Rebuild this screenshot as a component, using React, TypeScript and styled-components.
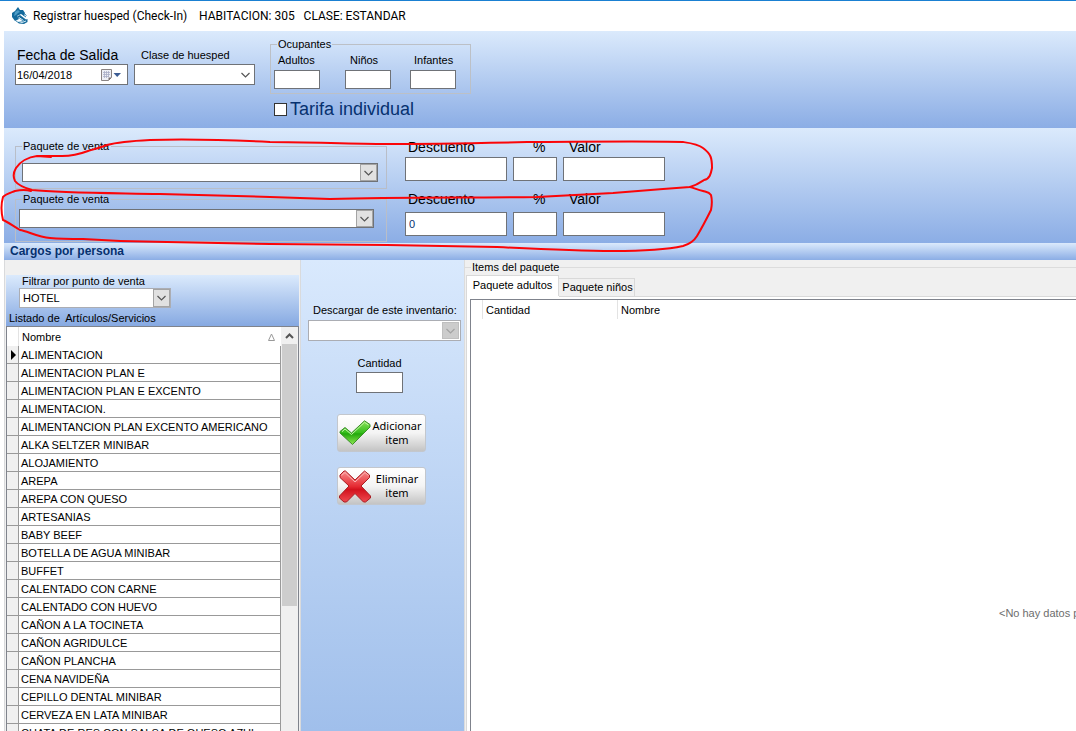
import React from "react";
import styled, { createGlobalStyle } from "styled-components";

const INK = "#000";
const NAVY = "#06316f";
const LINE = "#6f7277";
const PALE = "#dbeafc";
const DEEP = "#8badE5";

const GlobalStyle = createGlobalStyle`
  *, *::before, *::after { box-sizing: border-box; }
  html, body, #root { height: 100%; }
  body {
    margin: 0;
    overflow: hidden;
    background: #fff;
    color: ${INK};
    font: 11px/14px "Liberation Sans", Arial, sans-serif;
  }
  input, select, button { font: inherit; color: inherit; margin: 0; border-radius: 0; }
`;

const Window = styled.div`
  position: relative;
  display: flex;
  flex-direction: column;
  height: 100%;
  overflow: hidden;
  border-top: 1px solid #1a80d2;
  padding-left: 4px;
`;

const TitleBar = styled.header`
  display: flex;
  flex: none;
  align-items: center;
  height: 30px;
  padding-left: 8px;
  white-space: pre;
`;

const TitleText = styled.h1`
  margin: 0 0 0 5px;
  font: 12px/16px Roboto, sans-serif;
`;

const Band = styled.section`
  display: flex;
  flex: none;
  align-items: flex-start;
  background: linear-gradient(${PALE}, ${DEEP});
`;

const StayBand = styled(Band)`
  padding: 7px 11px 8px;
`;

const SaleBand = styled(Band)`
  padding: 11px 11px 1px;
`;

const Field = styled.div<{ $width?: number }>`
  display: flex;
  flex-direction: column;
  width: ${(p) => (p.$width ? `${p.$width}px` : "auto")};
`;

const TopField = styled(Field)`
  margin: 9px 6px 0 0;
  gap: 1px;
`;

const Label = styled.label<{ $large?: boolean; $indent?: number }>`
  padding-left: ${(p) => p.$indent ?? 0}px;
  font-size: ${(p) => (p.$large ? 14 : 11)}px;
  line-height: ${(p) => (p.$large ? 16 : 14)}px;
  white-space: pre;
`;

const ClassLabel = styled(Label)`
  line-height: 16px;
`;

const TextBox = styled.input<{ $width?: number; $height?: number }>`
  width: ${(p) => (p.$width ? `${p.$width}px` : "100%")};
  height: ${(p) => p.$height ?? 24}px;
  padding: 0 3px;
  border: 1px solid ${LINE};
  background: #fff;
  color: ${NAVY};
  outline: none;
`;

const DateBox = styled.div`
  display: flex;
  align-items: center;
  height: 21px;
  padding-right: 5px;
  border: 1px solid ${LINE};
  background: #fff;
`;

const DateInput = styled.input`
  flex: 1;
  min-width: 0;
  padding: 0 1px;
  border: 0;
  background: none;
  outline: none;
`;

const CalendarButton = styled.button`
  display: flex;
  align-items: center;
  padding: 0;
  border: 0;
  background: none;
`;

const Combo = styled.div<{ $width?: number; $height?: number; $soft?: boolean }>`
  display: grid;
  width: ${(p) => (p.$width ? `${p.$width}px` : "auto")};
  height: ${(p) => p.$height ?? 19}px;
  border: 1px solid ${(p) => (p.$soft ? "#abadb3" : LINE)};
  background: #fff;
`;

const ComboSelect = styled.select`
  grid-area: 1 / 1;
  width: 100%;
  height: 100%;
  padding: 0 3px;
  border: 0;
  background: none;
  appearance: none;
  outline: none;
  opacity: 1;
`;

const ComboArrow = styled.span<{ $kind: "flat" | "boxed" | "disabled" }>`
  grid-area: 1 / 1;
  justify-self: end;
  display: flex;
  align-items: center;
  justify-content: center;
  width: 17px;
  pointer-events: none;
  color: ${(p) => (p.$kind === "disabled" ? "#a3a3a3" : "#555")};
  background: ${(p) => ({ flat: "none", boxed: "#e1e1e1", disabled: "#ccc" })[p.$kind]};
  border: ${(p) => ({ flat: "0", boxed: "1px solid #a4a4a4", disabled: "1px solid #bfbfbf" })[p.$kind]};
  margin: ${(p) => (p.$kind === "disabled" ? "1px" : "0")};
`;

const Occupants = styled.fieldset`
  width: 201px;
  min-width: 0;
  margin: 0;
  padding: 3px 3px 4px;
  border: 1px solid #bcc0c6;
`;

const Legend = styled.legend`
  margin-left: 3px;
  padding: 0 1px;
  line-height: 12px;
`;

const OccupantGrid = styled.div`
  display: grid;
  grid-template-columns: 71px 65px 46px;
`;

const OccupantField = styled(Field)`
  gap: 3px;
`;

const OccupantColumn = styled.div`
  margin-left: 9px;
`;

const Tariff = styled.label`
  display: flex;
  align-items: center;
  gap: 3px;
  height: 22px;
  margin: 4px 0 0 4px;
  color: ${NAVY};
  font-size: 18px;
  line-height: 22px;
`;

const TickBox = styled.input`
  width: 13px;
  height: 13px;
  appearance: none;
  border: 1px solid #333;
  background: #fff;
  &:checked { background: ${NAVY}; }
`;

const PackageGroups = styled.div`
  display: flex;
  flex-direction: column;
  gap: 4px;
  width: 372px;
  margin: 1px 18px 0 0;
`;

const PackageGroup = styled.fieldset<{ $second?: boolean }>`
  min-width: 0;
  height: 49px;
  margin: 0;
  padding: ${(p) => (p.$second ? "4px 12px 0 3px" : "11px 8px 0 6px")};
  border: 1px solid #b9bec8;
`;

const PackageLegend = styled.legend<{ $second?: boolean }>`
  margin-left: ${(p) => (p.$second ? 3 : 0)}px;
  padding: 0 2px 0 1px;
  line-height: 12px;
`;

const Discounts = styled.div`
  display: flex;
  flex-direction: column;
  gap: 10px;
`;

const DiscountRow = styled.div<{ $gap: number }>`
  display: grid;
  grid-template-columns: 102px 44px 102px;
  column-gap: 6px;
  & > div { gap: ${(p) => p.$gap}px; }
`;

const SectionBar = styled.h2`
  flex: none;
  margin: 0;
  padding-left: 6px;
  height: 17px;
  background: linear-gradient(${PALE}, ${DEEP});
  color: ${NAVY};
  font-size: 12px;
  line-height: 17px;
`;

const Body = styled.main`
  display: flex;
  flex: 1;
  min-height: 0;
`;

const Catalog = styled.section`
  display: flex;
  flex: none;
  flex-direction: column;
  width: 297px;
  padding: 15px 1px 0;
  border: solid #d9dadc;
  border-width: 0 1px;
  background: #f0f0f0;
`;

const CatalogHead = styled.div`
  height: 51px;
  background: linear-gradient(${PALE}, #86a9e2);
`;

const FilterArea = styled.div`
  padding-left: 13px;
`;

const FilterLabel = styled(Label)`
  display: block;
  line-height: 13px;
`;

const ListCaption = styled.p`
  margin: 3px 0 0 3px;
  line-height: 14px;
  white-space: pre;
`;

const ListBox = styled.div`
  display: flex;
  flex: 1;
  min-height: 0;
  overflow: hidden;
  border: solid #7f838c;
  border-width: 1px 1px 0;
  background: #fff;
`;

const ItemTable = styled.table`
  flex: 1;
  align-self: flex-start;
  border-collapse: separate;
  border-spacing: 0;
  table-layout: fixed;
`;

const MarkHead = styled.th`
  width: 12px;
  padding: 0;
  border-right: 1px solid #e3e3e3;
`;

const NameHead = styled.th`
  height: 19px;
  padding: 0 6px 0 3px;
  font-weight: 400;
  text-align: left;
`;

const HeadLine = styled.span`
  display: flex;
  align-items: center;
  justify-content: space-between;
`;

const MarkCell = styled.td`
  height: 18px;
  padding: 0;
  border: solid #999;
  border-width: 0 1px 1px 0;
  background: #f0f0f0;
  line-height: 0;
`;

const NameCell = styled.td`
  height: 18px;
  padding: 1px 0 0 2px;
  border: solid #999;
  border-width: 0 1px 1px 0;
  line-height: 16px;
  white-space: nowrap;
`;

const ScrollTrack = styled.div`
  display: flex;
  flex-direction: column;
  align-items: stretch;
  width: 17px;
  padding: 0 1px;
  background: #f0f0f0;
`;

const ScrollUp = styled.button`
  display: flex;
  align-items: center;
  justify-content: center;
  height: 17px;
  padding: 0;
  border: 0;
  background: none;
  color: #555;
`;

const ScrollThumb = styled.div`
  height: 262px;
  background: #cdcdcd;
`;

const Transfer = styled.section`
  display: flex;
  flex: none;
  flex-direction: column;
  align-items: center;
  width: 163px;
  padding: 43px 2px 0 0;
  background: linear-gradient(#d9e9fd, #a0bfeb);
`;

const InventoryField = styled(Field)`
  width: 153px;
  gap: 3px;
  margin: 0 0 15px 6px;
`;

const QuantityField = styled(Field)`
  align-items: center;
  gap: 2px;
  margin: 0 4px 21px 0;
`;

const ActionButton = styled.button`
  display: flex;
  align-items: center;
  width: 89px;
  height: 38px;
  margin-bottom: 15px;
  padding: 0 2px 0 1px;
  border: 1px solid #c3c7cd;
  border-radius: 3px;
  background: linear-gradient(#fff, #f4f4f4 50%, #c4c4c4);
`;

const ActionText = styled.span`
  flex: 1;
  font: 11px/14px "Noto Sans", sans-serif;
  text-align: center;
`;

const Package = styled.section`
  display: flex;
  flex: 1 0 1210px;
  flex-direction: column;
  border-left: 1px solid #dcdcdc;
  background: #f0f0f0;
`;

const PackageTitle = styled.h3`
  display: flex;
  align-items: center;
  gap: 1px;
  margin: 0;
  font-size: 11px;
  font-weight: 400;
  line-height: 14px;
  &::before, &::after { content: ""; height: 1px; background: #dcdcdc; }
  &::before { width: 6px; }
  &::after { flex: 1; }
`;

const Tabs = styled.div`
  display: flex;
  align-items: flex-end;
  height: 21px;
  padding-left: 1px;
`;

const TabStrip = styled.div`
  padding-top: 1px;
`;

const Tab = styled.button<{ $active?: boolean }>`
  width: ${(p) => (p.$active ? 93 : 76)}px;
  height: ${(p) => (p.$active ? 21 : 18)}px;
  padding: ${(p) => (p.$active ? "0 0 2px" : "0 0 1px 2px")};
  border: 1px solid #d9d9d9;
  border-bottom: 0;
  border-left-width: ${(p) => (p.$active ? 1 : 0)}px;
  background: ${(p) => (p.$active ? "#fff" : "#f0f0f0")};
`;

const TabPage = styled.div`
  flex: 1;
  margin-left: 1px;
  padding: 3px;
  border-left: 1px solid #d9d9d9;
  background: linear-gradient(#d9d9d9, #d9d9d9) 92px 0 / 100% 1px no-repeat #fff;
`;

const PackageGrid = styled.div`
  border: 1px solid #7f838c;
  background: #fff;
`;

const GridTable = styled.table`
  width: 100%;
  border-collapse: separate;
  border-spacing: 0;
  table-layout: fixed;
`;

const GridHead = styled.th<{ $width?: number }>`
  width: ${(p) => (p.$width ? `${p.$width}px` : "auto")};
  height: 19px;
  padding: 0 3px;
  border-right: 1px solid #e3e3e3;
  font-weight: 400;
  text-align: left;
`;

const EmptyCell = styled.td`
  height: 588px;
  padding: 0;
  color: #6d6d6d;
  text-align: center;
`;

const RedMarks = styled.svg`
  position: absolute;
  top: -1px;
  left: 0;
  pointer-events: none;
`;

const Chevron = ({ up }: { up?: boolean }) => (
  <svg width="9" height="6" viewBox="0 0 9 6" fill="none" stroke="currentColor" strokeWidth={up ? 2 : 1.2}>
    <path d={up ? "M1 5 4.500 1.500 8 5" : "M.5 1 4.500 5 8.500 1"} />
  </svg>
);

const AppLogo = () => (
  <svg width="16" height="18" viewBox="0 0 16 18" aria-hidden="true">
    <path d="M6 0 8 3 11 3 13 6 12 9 9 7 5 9 7 12 3 14 0 10 0 6 3 4Z" fill="#146a9c" />
    <path d="M3 5 6 3 8 5 6 6 4 8 2 9Z" fill="#4d9cc6" />
    <path d="M5 9.500 8 8 14 12.500 15.500 12 15.500 15 12 17 7 16.500 3 13.500 7 14.500 11 14.500 8 12Z" fill="#176b9b" />
    <path d="M7 10.500 11.500 13.500M5 14 10 15.500 14 14" fill="none" stroke="#d5edf8" strokeWidth="1" />
    <path d="M11 8 14 10M12 6.500 14.500 8.500" stroke="#2f80ad" />
  </svg>
);

const CalendarIcon = () => (
  <svg width="22" height="14" viewBox="0 0 22 14" aria-hidden="true">
    <path d="M1.500 1.500h10v8l-3 3h-7z" fill="#eef0f6" stroke="#8a8484" />
    <path d="M3 4.500h7M3 6.500h7M3 8.500h6M4.500 3v7M6.500 3v7M8.500 3v6" stroke="#a9afc6" strokeWidth=".8" />
    <path d="M8.500 12.500v-3h3z" fill="#776f6f" />
    <path d="M13.500 5h7.500L17.200 9z" fill="#3c5c93" />
  </svg>
);

const CheckIcon = () => (
  <svg width="32" height="26" viewBox="0 0 32 26" aria-hidden="true">
    <defs>
      <linearGradient id="leaf" x1="0" y1="0" x2="0" y2="1">
        <stop offset="0" stopColor="#8be35c" />
        <stop offset=".5" stopColor="#35bd1c" />
        <stop offset=".55" stopColor="#22a80c" />
        <stop offset="1" stopColor="#8fe852" />
      </linearGradient>
    </defs>
    <path d="M1 11.500 6 7.500 12.500 13 25.500 .8 31 4.500V7L13.500 24.500 1 13Z" fill="url(#leaf)" stroke="#3c8f2c" strokeLinejoin="round" />
    <path d="M3 11.700 6 9 12.500 14.500 25.500 2.300 29.500 5" fill="none" stroke="#c5f5a8" strokeWidth="1" />
  </svg>
);

const CrossIcon = () => (
  <svg width="32" height="33" viewBox="0 0 32 33" aria-hidden="true">
    <defs>
      <linearGradient id="ruby" x1="0" y1="0" x2="0" y2="1">
        <stop offset="0" stopColor="#f78c8c" />
        <stop offset=".5" stopColor="#e52a32" />
        <stop offset=".6" stopColor="#d3121d" />
        <stop offset="1" stopColor="#ee4a50" />
      </linearGradient>
    </defs>
    <path d="M6.500 1 16 10 25.500 1 30.500 5V7.500L22 16 31.500 26V28L26.500 32H24.500L16 23.500 7.500 32H5L.5 28V26L10 16 1 7.500V5L5 1Z" fill="url(#ruby)" stroke="#a91d22" strokeLinejoin="round" />
    <path d="M2.500 5.500 6 2.500 16 12 26 2.500 29.500 5.500" fill="none" stroke="#fbb5b5" strokeWidth="1" />
  </svg>
);

type ComboProps = {
  id: string;
  label?: string;
  options?: string[];
  width?: number;
  height?: number;
  kind?: "flat" | "boxed" | "disabled";
  soft?: boolean;
};

const ComboBox = ({ id, label, options = [""], width, height, kind = "boxed", soft }: ComboProps) => (
  <Combo $width={width} $height={height} $soft={soft}>
    <ComboSelect id={id} aria-label={label} disabled={kind === "disabled"}>
      {options.map((o) => (
        <option key={o}>{o}</option>
      ))}
    </ComboSelect>
    <ComboArrow $kind={kind}>
      <Chevron />
    </ComboArrow>
  </Combo>
);

const Discount = ({ row, gap, amount }: { row: number; gap: number; amount: string }) => (
  <DiscountRow $gap={gap}>
    <Field>
      <Label $large $indent={3} htmlFor={`descuento-${row}`}>Descuento</Label>
      <TextBox id={`descuento-${row}`} defaultValue={amount} />
    </Field>
    <Field>
      <Label $large $indent={20} htmlFor={`porcentaje-${row}`}>%</Label>
      <TextBox id={`porcentaje-${row}`} />
    </Field>
    <Field>
      <Label $large $indent={6} htmlFor={`valor-${row}`}>Valor</Label>
      <TextBox id={`valor-${row}`} />
    </Field>
  </DiscountRow>
);

const occupants = [
  { id: "adultos", text: "Adultos", indent: 4 },
  { id: "ninos", text: "Niños", indent: 5 },
  { id: "infantes", text: "Infantes", indent: 4 },
];

const items = [
  "ALIMENTACION",
  "ALIMENTACION PLAN E",
  "ALIMENTACION PLAN E EXCENTO",
  "ALIMENTACION.",
  "ALIMENTANCION PLAN EXCENTO AMERICANO",
  "ALKA SELTZER MINIBAR",
  "ALOJAMIENTO",
  "AREPA",
  "AREPA CON QUESO",
  "ARTESANIAS",
  "BABY BEEF",
  "BOTELLA DE AGUA MINIBAR",
  "BUFFET",
  "CALENTADO CON CARNE",
  "CALENTADO CON HUEVO",
  "CAÑON A LA TOCINETA",
  "CAÑON AGRIDULCE",
  "CAÑON PLANCHA",
  "CENA NAVIDEÑA",
  "CEPILLO DENTAL MINIBAR",
  "CERVEZA EN LATA MINIBAR",
  "CHATA DE RES CON SALSA DE QUESO AZUL",
];

export default function App() {
  return (
    <>
      <GlobalStyle />
      <Window>
        <TitleBar>
          <AppLogo />
          <TitleText>{"Registrar huesped (Check-In)    HABITACION: 305   CLASE: ESTANDAR"}</TitleText>
        </TitleBar>

        <StayBand>
          <TopField $width={113}>
            <Label $large $indent={2} htmlFor="salida">Fecha de Salida</Label>
            <DateBox>
              <DateInput id="salida" defaultValue="16/04/2018" />
              <CalendarButton aria-label="Abrir calendario">
                <CalendarIcon />
              </CalendarButton>
            </DateBox>
          </TopField>
          <TopField $width={121}>
            <ClassLabel $indent={7} htmlFor="clase">Clase de huesped</ClassLabel>
            <ComboBox id="clase" height={21} kind="flat" />
          </TopField>
          <OccupantColumn>
            <Occupants>
              <Legend>Ocupantes</Legend>
              <OccupantGrid>
                {occupants.map((o) => (
                  <OccupantField key={o.id}>
                    <Label $indent={o.indent} htmlFor={o.id}>{o.text}</Label>
                    <TextBox id={o.id} $width={46} $height={19} />
                  </OccupantField>
                ))}
              </OccupantGrid>
            </Occupants>
            <Tariff>
              <TickBox type="checkbox" />
              Tarifa individual
            </Tariff>
          </OccupantColumn>
        </StayBand>

        <SaleBand>
          <PackageGroups>
            <PackageGroup>
              <PackageLegend>Paquete de venta</PackageLegend>
              <ComboBox id="paquete-1" label="Paquete de venta" />
            </PackageGroup>
            <PackageGroup $second>
              <PackageLegend $second>Paquete de venta</PackageLegend>
              <ComboBox id="paquete-2" label="Paquete de venta" />
            </PackageGroup>
          </PackageGroups>
          <Discounts>
            <Discount row={1} gap={2} amount="" />
            <Discount row={2} gap={5} amount="0" />
          </Discounts>
        </SaleBand>

        <SectionBar>Cargos por persona</SectionBar>

        <Body>
          <Catalog>
            <CatalogHead>
              <FilterArea>
                <FilterLabel $indent={3} htmlFor="filtro">Filtrar por punto de venta</FilterLabel>
                <ComboBox id="filtro" options={["HOTEL"]} width={152} height={20} soft />
              </FilterArea>
              <ListCaption>{"Listado de  Artículos/Servicios"}</ListCaption>
            </CatalogHead>
            <ListBox>
              <ItemTable>
                <thead>
                  <tr>
                    <MarkHead />
                    <NameHead>
                      <HeadLine>
                        Nombre
                        <svg width="7" height="8" viewBox="0 0 7 8" fill="none" stroke="#999">
                          <path d="M3.500 1 6.500 7.500H.5Z" />
                        </svg>
                      </HeadLine>
                    </NameHead>
                  </tr>
                </thead>
                <tbody>
                  {items.map((name, i) => (
                    <tr key={name}>
                      <MarkCell>
                        {i === 0 && (
                          <svg width="10" height="10" viewBox="0 0 10 10">
                            <path d="M4 0 9 5 4 10Z" />
                          </svg>
                        )}
                      </MarkCell>
                      <NameCell>{name}</NameCell>
                    </tr>
                  ))}
                </tbody>
              </ItemTable>
              <ScrollTrack>
                <ScrollUp aria-label="Subir">
                  <Chevron up />
                </ScrollUp>
                <ScrollThumb />
              </ScrollTrack>
            </ListBox>
          </Catalog>

          <Transfer>
            <InventoryField>
              <Label $indent={5} htmlFor="inventario">Descargar de este inventario:</Label>
              <ComboBox id="inventario" height={21} kind="disabled" soft />
            </InventoryField>
            <QuantityField>
              <Label htmlFor="cantidad">Cantidad</Label>
              <TextBox id="cantidad" $width={47} $height={21} />
            </QuantityField>
            <ActionButton>
              <CheckIcon />
              <ActionText>Adicionar item</ActionText>
            </ActionButton>
            <ActionButton>
              <CrossIcon />
              <ActionText>Eliminar item</ActionText>
            </ActionButton>
          </Transfer>

          <Package>
            <PackageTitle>Items del paquete</PackageTitle>
            <TabStrip>
              <Tabs role="tablist">
                <Tab $active role="tab" aria-selected="true">Paquete adultos</Tab>
                <Tab role="tab" aria-selected="false">Paquete niños</Tab>
              </Tabs>
            </TabStrip>
            <TabPage>
              <PackageGrid>
                <GridTable>
                  <thead>
                    <tr>
                      <GridHead $width={12} />
                      <GridHead $width={135}>Cantidad</GridHead>
                      <GridHead>Nombre</GridHead>
                    </tr>
                  </thead>
                  <tbody>
                    <tr>
                      <EmptyCell colSpan={3}>{"<No hay datos para mostrar>"}</EmptyCell>
                    </tr>
                  </tbody>
                </GridTable>
              </PackageGrid>
            </TabPage>
          </Package>
        </Body>

        <RedMarks width="720" height="256" viewBox="0 0 720 256" fill="none" stroke="#fb0508" strokeWidth="2" strokeLinejoin="round" strokeLinecap="round" aria-hidden="true">
          <path d="M51 157 37 156C28 157 20 162 16 168 13 173 13 177 15 181 18 185 25 188 32 190 60 193 110 193 160 194L270 197 330 199C400 197 470 198 537 197L613 193 663 189 690 187C697 185 701 182 704 180 710 179 711 173 712 168 712 158 711 154 703 148 698 144 690 143 683 142 640 141 570 142 530 142 482 143 435 144 387 144 350 144 310 142 270 142 230 140 190 139 150 140 130 141 118 142 107 145 99 148 95 149 88 151 80 154 72 156 62 156L37 156" />
          <path d="M31 191C27 190 20 190 15 191 10 193 6 194 3 197 1 204 1 212 3 220 8 222 13 226 20 230 27 231 38 237 50 238 61 239 72 239 83 239 111 241 139 242 167 242L270 244 387 245 497 247C536 249 575 251 613 251 640 251 665 250 683 246 690 244 694 241 697 236 703 226 707 218 711 210 712 205 712 199 711 195 709 192 706 192 703 191 698 190 694 188 690 187" />
        </RedMarks>
      </Window>
    </>
  );
}
